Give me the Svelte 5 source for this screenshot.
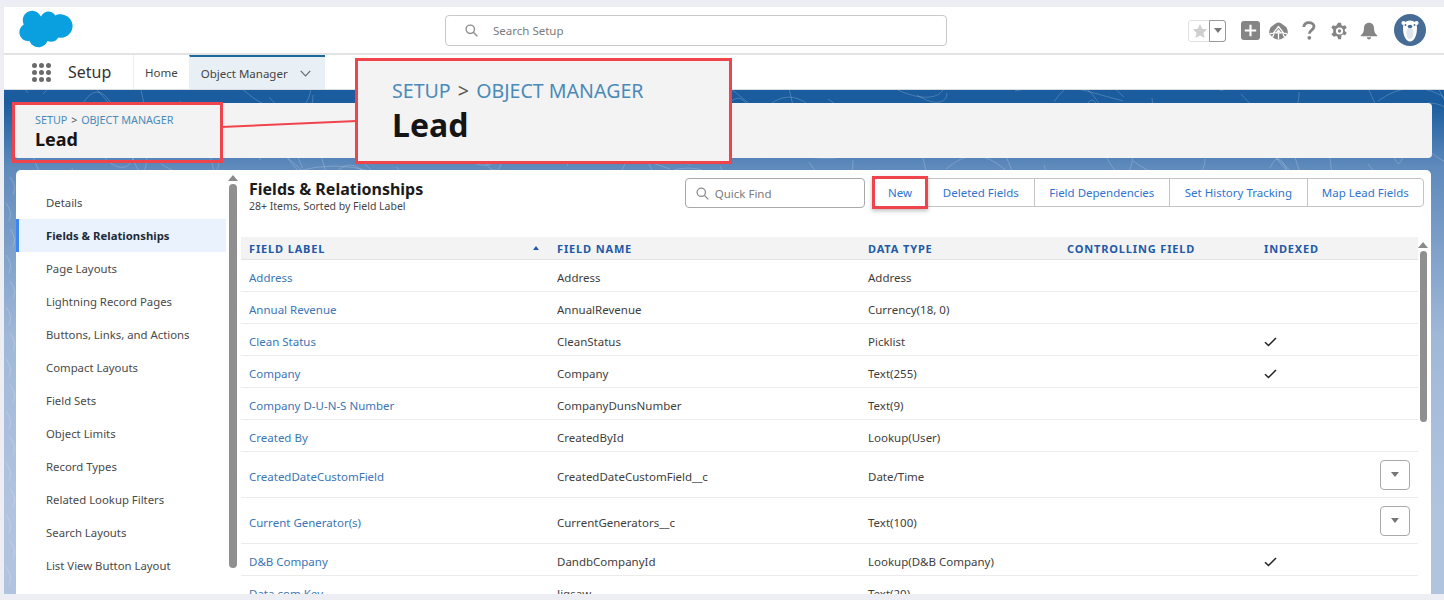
<script>
    const sideItems = [
        'Details', 'Fields & Relationships', 'Page Layouts', 'Lightning Record Pages',
        'Buttons, Links, and Actions', 'Compact Layouts', 'Field Sets', 'Object Limits',
        'Record Types', 'Related Lookup Filters', 'Search Layouts', 'List View Button Layout',
        'Scoping Rules'
    ];

    const rows = [
        { label: 'Address', name: 'Address', type: 'Address' },
        { label: 'Annual Revenue', name: 'AnnualRevenue', type: 'Currency(18, 0)' },
        { label: 'Clean Status', name: 'CleanStatus', type: 'Picklist', indexed: true },
        { label: 'Company', name: 'Company', type: 'Text(255)', indexed: true },
        { label: 'Company D-U-N-S Number', name: 'CompanyDunsNumber', type: 'Text(9)' },
        { label: 'Created By', name: 'CreatedById', type: 'Lookup(User)' },
        { label: 'CreatedDateCustomField', name: 'CreatedDateCustomField__c', type: 'Date/Time', menu: true },
        { label: 'Current Generator(s)', name: 'CurrentGenerators__c', type: 'Text(100)', menu: true },
        { label: 'D&B Company', name: 'DandbCompanyId', type: 'Lookup(D&B Company)', indexed: true },
        { label: 'Data.com Key', name: 'Jigsaw', type: 'Text(20)' }
    ];

    const actions = ['New', 'Deleted Fields', 'Field Dependencies', 'Set History Tracking', 'Map Lead Fields'];

    // faint contour lines on the blue banner
    const swirls = [];
    for (let i = 0; i < 120; i++) {
        const x = i * 12 + (i * 7) % 9;
        const y = 76 + (i * 37) % 100;
        const w = 8 + (i % 5) * 7;
        const h = 10 + (i % 4) * 8;
        if (i % 3 === 0) {
            swirls.push(`M${x} ${y}q${w} ${-h} ${w * 2} 0t${w} ${h}`);
        } else if (i % 3 === 1) {
            swirls.push(`M${x} ${y}c${w} ${h} ${w * 2} ${h} ${w * 2} ${-2}`);
        } else {
            swirls.push(`M${x} ${y}l${w / 2} ${h}`);
        }
    }
    for (let i = 0; i < 16; i++) {
        swirls.push(`M${i % 2 ? 2 : 6} ${170 + i * 26}c4 6 6 10 3 18`);
    }
</script>

<div class="frame">
    <svg class="swirls" width="1440" height="600" aria-hidden="true">
        {#each swirls as d}
            <path {d} />
        {/each}
    </svg>

    <header class="top">
        <svg class="logo" width="54" height="38" viewBox="0 0 54 38">
            <path fill="#0a9fdf" d="M22 6.5C24 3 27 1.3 30 1.6c2.8 .2 5 1.7 6.3 4 1.700-1 3.700-1.500 5.700-1.300C48.500 4.800 53.600 10 53.600 16c0 6.500-5.300 11.700-11.500 11.700-.9 0-1.800-.1-2.700-.3-1.500 2.600-4.300 4.300-7.400 4.300-1.300 0-2.500-.3-3.600-.8-1.500 3.900-5 6.300-9 6.300-4.200 0-7.700-2.700-9-6.400-.6 .1-1.200 .2-1.900 .2C4 31 .4 27 .4 22.300c0-3.300 1.700-6.100 4.300-7.700C4.100 13.300 3.800 11.800 3.800 10.300 3.800 4.800 8.300 .8 13.400 .8c3.500 0 6.600 2.300 8.600 5.700z"/>
        </svg>

        <div class="search">
            <svg width="13" height="13" viewBox="0 0 14 14" fill="none" stroke="#8c8c8c" stroke-width="1.500">
                <circle cx="5.700" cy="5.700" r="4.500"/><path d="M9 9l4.300 4.300"/>
            </svg>
            <span>Search Setup</span>
        </div>

        <div class="tools">
            <div class="fav">
                <span class="fav-star">
                    <svg width="16" height="16" viewBox="0 0 16 16"><path fill="#cfcfcf" d="M8 1l2.200 4.700 5 .6-3.700 3.500 1 5.100L8 12.400 3.500 14.900l1-5.100L.8 6.300l5-.6z"/></svg>
                </span>
                <span class="fav-more"><i class="caret"></i></span>
            </div>
            <svg class="ic-plus" width="19" height="19" viewBox="0 0 19 19">
                <rect width="19" height="19" rx="3" fill="#858585"/>
                <path d="M9.500 3.800v11.400M3.800 9.500h11.400" stroke="#fff" stroke-width="2.200"/>
            </svg>
            <svg class="ic-trail" width="19" height="18" viewBox="0 0 19 18">
                <path fill="#858585" d="M7 1.200C8.500 .4 10.500 .4 12 1.200l4.500 3.300c1.700 1.400 2.400 3.800 2.200 6.500-.1 1-.5 1.700-1.400 2.300-2 2.700-4.800 4.200-7.800 4.200s-5.800-1.500-7.800-4.200C.8 12.700 .4 12 .3 11 .1 8.300 .8 5.900 2.500 4.500z"/>
                <path fill="none" stroke="#fff" stroke-width="1.300" d="M.8 11.800c2.500-.6 4-1 5.500-1h6.400c1.500 0 3 .4 5.500 1M4.500 10.800L9.500 4.500l5 6.300M7.200 10.800L9.500 8l2.300 2.800M9.500 11v6.200M5 12l-1.500 3M14 12l1.500 3"/>
            </svg>
            <svg class="ic-help" width="14" height="19" viewBox="0 0 14 19" fill="none">
                <path d="M1.800 6C2 3.200 4.200 1.700 7 1.700c2.900 0 5 1.700 5 3.900 0 3.500-4.700 3.400-4.700 7.200" stroke="#858585" stroke-width="2.800"/>
                <circle cx="7.300" cy="16.800" r="1.900" fill="#858585"/>
            </svg>
            <svg class="ic-gear" width="17" height="18" viewBox="0 0 17 18">
                <path fill="#858585" d="M7 .8h3l.5 2.500 1.300 .7 2.400-.8 1.500 2.600-1.900 1.700v1.500l1.900 1.700-1.500 2.600-2.400-.8-1.300 .7L10 17.200H7l-.5-2.500-1.300-.7-2.400 .8L.3 12.200l1.900-1.700V9 7.500L.3 5.800l1.500-2.600 2.400 .8 1.300-.7z"/>
                <circle cx="8.500" cy="9" r="3.600" fill="#fff"/>
                <circle cx="8.500" cy="9" r="1.700" fill="#858585"/>
            </svg>
            <svg class="ic-bell" width="18" height="18" viewBox="0 0 18 18">
                <path fill="#858585" d="M9 .8c3.200 0 5 2.400 5 5.200 0 4 1 5.500 3.200 7.300v1H.8v-1C3 11.500 4 10 4 6c0-2.800 1.800-5.200 5-5.200z"/>
                <path fill="#858585" d="M6.800 15.300h4.400C11 16.600 10.100 17.400 9 17.400s-2-.8-2.200-2.100z"/>
            </svg>
            <svg class="avatar" width="32" height="32" viewBox="0 0 32 32">
                <circle cx="16" cy="16" r="16" fill="#476c96"/>
                <circle cx="9.500" cy="9" r="2.100" fill="#fff"/>
                <circle cx="22.500" cy="9" r="2.100" fill="#fff"/>
                <path fill="#fff" d="M16 6.500c4.500 0 7 3 7 7.500 0 6.800-2.500 13.500-7 13.500S9 20.800 9 14c0-4.500 2.500-7.500 7-7.500z"/>
                <path fill="#dfe5ec" d="M16 14c2.500 0 3.600 1.800 3.600 4.500 0 3.500-1.400 6.500-3.600 6.500s-3.600-3-3.600-6.500C12.400 15.800 13.500 14 16 14z"/>
                <ellipse cx="16" cy="12.500" rx="2.300" ry="1.700" fill="#476c96"/>
                <circle cx="11.500" cy="11" r=".9" fill="#476c96"/>
                <circle cx="20.500" cy="11" r=".9" fill="#476c96"/>
            </svg>
        </div>
    </header>

    <nav class="nav">
        <div class="waffle">
            {#each Array(9) as _}<i></i>{/each}
        </div>
        <span class="app-name">Setup</span>
        <span class="tab">Home</span>
        <span class="tab tab-on">
            Object Manager
            <svg width="11" height="7" viewBox="0 0 11 7" fill="none" stroke="#6b6b6b" stroke-width="1.200"><path d="M.7 .8l4.800 5 4.800-5"/></svg>
        </span>
    </nav>

    <section class="crumb-card">
        <div class="crumbs"><a href="#setup">SETUP</a> <b>&gt;</b> <a href="#om">OBJECT MANAGER</a></div>
        <h1>Lead</h1>
    </section>

    <main class="panel">
        <aside class="side">
            <ul>
                {#each sideItems as item}
                    <li class:active={item === 'Fields & Relationships'}>{item}</li>
                {/each}
            </ul>
            <div class="vbar vbar-side"><i class="up"></i><i class="thumb"></i></div>
        </aside>

        <div class="content">
            <div class="bar">
                <div>
                    <h2>Fields &amp; Relationships</h2>
                    <p>28+ Items, Sorted by Field Label</p>
                </div>
                <div class="quick">
                    <svg width="13" height="13" viewBox="0 0 14 14" fill="none" stroke="#8c8c8c" stroke-width="1.400">
                        <circle cx="5.700" cy="5.700" r="4.500"/><path d="M9 9l4.300 4.300"/>
                    </svg>
                    <span>Quick Find</span>
                </div>
                <div class="btns">
                    {#each actions as a}
                        <button type="button">{a}</button>
                    {/each}
                </div>
            </div>

            <div class="table">
                <div class="row head">
                    <span class="th-sort">FIELD LABEL <i class="sort"></i></span>
                    <span>FIELD NAME</span>
                    <span>DATA TYPE</span>
                    <span>CONTROLLING FIELD</span>
                    <span>INDEXED</span>
                </div>
                {#each rows as r}
                    <div class="row" class:tall={r.menu}>
                        <a href="#field">{r.label}</a>
                        <span>{r.name}</span>
                        <span>{r.type}</span>
                        <span></span>
                        <span class="idx">
                            {#if r.indexed}
                                <svg width="13" height="10" viewBox="0 0 13 10" fill="none" stroke="#222" stroke-width="1.500"><path d="M1 5.200l3.500 3.300L12 1"/></svg>
                            {/if}
                            {#if r.menu}
                                <span class="row-menu"><i class="caret"></i></span>
                            {/if}
                        </span>
                    </div>
                {/each}
                <div class="vbar vbar-table"><i class="up"></i><i class="thumb"></i></div>
            </div>
        </div>
    </main>

    <!-- annotations drawn over the screenshot -->
    <div class="mark mark-crumb"></div>
    <div class="mark mark-new"></div>
    <svg class="mark-line" width="136" height="10" viewBox="0 0 136 10"><path d="M0 8L136 2" stroke="#f0444c" stroke-width="2"/></svg>
    <div class="callout">
        <div class="crumbs"><a href="#setup">SETUP</a> <b>&gt;</b> <a href="#om">OBJECT MANAGER</a></div>
        <h1>Lead</h1>
    </div>
</div>

<style>
    :global(body) {
        margin: 0;
        background: #eceef3;
        overflow: hidden;
    }

    .frame {
        position: relative;
        box-sizing: border-box;
        display: flex;
        flex-direction: column;
        margin: 7px 0 0 4px;
        width: 1440px;
        height: 587px;
        overflow: hidden;
        background: linear-gradient(#1a5c9e 0, #1a5c9e 96px, #5f8abc 160px, #a0b8d8 330px, #b0c4e0 500px);
        font-family: "Noto Sans", "Open Sans", sans-serif;
        font-size: 11.5px;
        color: #3e3e3c;
    }

    .swirls {
        position: absolute;
        left: 0;
        top: 0;
        fill: none;
        stroke: rgba(255, 255, 255, 0.2);
    }

    .top {
        position: relative;
        display: flex;
        align-items: center;
        height: 46px;
        flex: none;
        background: #fff;
        border-bottom: 2px solid #e3e3e3;
    }

    .logo {
        margin: 0 0 3px 15px;
    }

    .search {
        display: flex;
        align-items: center;
        box-sizing: border-box;
        width: 502px;
        height: 31px;
        margin: 1px 0 0 372px;
        padding-left: 19px;
        gap: 15px;
        border: 1px solid #c9c9c9;
        border-radius: 4px;
        color: #7b7b7b;
    }

    .tools {
        display: flex;
        align-items: center;
        margin-left: 241px;
    }

    .fav {
        display: flex;
        box-sizing: border-box;
        width: 38px;
        height: 22px;
        margin-top: 1px;
        border: 1px solid #e2e2e2;
        border-radius: 3px;
    }

    .fav-star {
        display: flex;
        align-items: center;
        justify-content: center;
        width: 21px;
    }

    .fav-more {
        display: flex;
        flex: 1;
        align-items: center;
        justify-content: center;
        margin: -1px;
        border: 1px solid #9a9a9a;
        border-radius: 0 3px 3px 0;
    }

    .caret {
        display: block;
        width: 0;
        height: 0;
        border-left: 4px solid transparent;
        border-right: 4px solid transparent;
        border-top: 5px solid #777;
    }

    .ic-plus { margin: 1px 0 0 15px; }
    .ic-trail { margin: 1px 0 0 9px; }
    .ic-help { margin: 1px 0 0 14px; }
    .ic-gear { margin: 1px 0 0 15px; }
    .ic-bell { margin: 1px 0 0 12px; }
    .avatar { margin: 0 0 0 16px; }

    .nav {
        position: relative;
        display: flex;
        align-items: center;
        height: 35px;
        flex: none;
        background: #fff;
        border-bottom: 1px solid #d8dde3;
        box-sizing: border-box;
    }

    .waffle {
        display: grid;
        grid-template-columns: repeat(3, 5px);
        gap: 2px;
        margin-left: 28px;
    }

    .waffle i {
        width: 5px;
        height: 5px;
        border-radius: 50%;
        background: #6b6b6b;
    }

    .app-name {
        margin-left: 17px;
        width: 65px;
        font-size: 16px;
        color: #333;
    }

    .tab {
        display: flex;
        align-items: center;
        height: 100%;
        padding: 0 11px;
        border-left: 1px solid #eee;
        color: #444;
    }

    .tab-on {
        gap: 12px;
        box-sizing: border-box;
        width: 136px;
        background: #e9f0f5;
        border-top: 2px solid #1b6a9e;
    }

    .crumb-card {
        position: relative;
        box-sizing: border-box;
        flex: none;
        width: 1418px;
        height: 55px;
        margin: 13px 0 0 10px;
        padding: 10px 0 0 21px;
        background: #f3f3f3;
        border-radius: 4px;
    }

    .crumbs {
        font-size: 10.800px;
        line-height: 14px;
        color: #4a8ab8;
    }

    .crumbs a {
        color: #4a8ab8;
        text-decoration: none;
    }

    .crumbs b {
        margin: 0 1px;
        font-weight: 400;
        color: #555;
    }

    h1 {
        margin: 0;
        font-size: 18px;
        line-height: 24px;
        font-weight: 700;
        color: #151515;
    }

    .panel {
        position: relative;
        display: flex;
        flex: 1;
        min-height: 0;
        width: 1415px;
        margin: 12px 0 0 12px;
        overflow: hidden;
        background: #fff;
        border-radius: 5px 5px 0 0;
    }

    .side {
        position: relative;
        flex: none;
        width: 225px;
    }

    .side ul {
        list-style: none;
        margin: 0;
        padding: 16px 0 0;
        width: 210px;
    }

    .side li {
        box-sizing: border-box;
        height: 33px;
        line-height: 33px;
        padding-left: 30px;
        font-size: 11.350px;
        color: #4a4a4a;
    }

    .side li.active {
        padding-left: 27px;
        border-left: 3px solid #3b86f0;
        background: #eaf3fd;
        font-weight: 700;
        color: #1f2b38;
    }

    .vbar {
        position: absolute;
        display: flex;
        flex-direction: column;
        align-items: center;
    }

    .vbar .up {
        width: 0;
        height: 0;
        border-left: 5px solid transparent;
        border-right: 5px solid transparent;
        border-bottom: 6px solid #8a8a8a;
    }

    .vbar .thumb {
        margin-top: 3px;
        border-radius: 4px;
        background: #8f8f8f;
    }

    .vbar-side {
        left: 212px;
        top: 5px;
        width: 10px;
    }

    .vbar-side .thumb {
        width: 8px;
        height: 384px;
    }

    .vbar-table {
        right: 3px;
        top: 5px;
        width: 10px;
    }

    .vbar-table .thumb {
        width: 7px;
        height: 171px;
    }

    .content {
        flex: 1;
        min-width: 0;
    }

    .bar {
        position: relative;
        display: flex;
        align-items: flex-start;
        box-sizing: border-box;
        height: 67px;
        padding: 8px 7px 0 8px;
    }

    h2 {
        margin: 0;
        font-size: 16px;
        line-height: 22px;
        font-weight: 700;
        color: #1b1b1b;
    }

    .bar p {
        margin: -1px 0 0;
        font-size: 10.500px;
        line-height: 14px;
        color: #444;
    }

    .quick {
        display: flex;
        align-items: center;
        box-sizing: border-box;
        gap: 6px;
        width: 180px;
        height: 30px;
        margin-left: auto;
        padding-left: 10px;
        border: 1px solid #a9a9a9;
        border-radius: 4px;
        color: #7b7b7b;
    }

    .btns {
        display: flex;
        box-sizing: border-box;
        height: 29px;
        margin-left: 7px;
        border: 1px solid #c4c4c4;
        border-radius: 4px;
    }

    .btns button {
        height: 100%;
        padding: 0 14.700px;
        background: none;
        border: 0;
        border-left: 1px solid #c4c4c4;
        font: inherit;
        color: #2f74d0;
    }

    .btns button:first-child {
        padding: 0 15.200px;
        border-left: 0;
    }

    .btns button:last-child {
        padding: 0 14.200px;
    }

    .table {
        position: relative;
    }

    .row {
        display: grid;
        grid-template-columns: 308px 311px 199px 197px 1fr;
        align-items: center;
        box-sizing: border-box;
        width: 1177px;
        height: 32px;
        padding: 4px 0 0 8px;
        border-bottom: 1px solid #ebebeb;
    }

    .row.tall {
        height: 46px;
    }

    .row a {
        color: #3a75b5;
        text-decoration: none;
    }

    .head {
        height: 23px;
        padding-top: 0;
        background: #f3f3f3;
        border-bottom: 1px solid #e2e2e2;
        font-size: 11px;
        font-weight: 700;
        letter-spacing: 0.850px;
        color: #1f5aa6;
    }

    .th-sort {
        position: relative;
    }

    .sort {
        position: absolute;
        right: 18px;
        top: 5px;
        width: 0;
        height: 0;
        border-left: 3.500px solid transparent;
        border-right: 3.500px solid transparent;
        border-bottom: 4px solid #1f5aa6;
    }

    .idx {
        display: flex;
        align-items: center;
        justify-content: space-between;
        padding-right: 8px;
    }

    .row-menu {
        display: flex;
        align-items: center;
        justify-content: center;
        box-sizing: border-box;
        width: 30px;
        height: 30px;
        margin: -4px 0 0 auto;
        background: #fff;
        border: 1px solid #a9a9a9;
        border-radius: 4px;
    }

    .mark {
        position: absolute;
        box-sizing: border-box;
        border: 3px solid #f0444c;
    }

    .mark-crumb {
        left: 8px;
        top: 95px;
        width: 211px;
        height: 61px;
    }

    .mark-new {
        left: 868px;
        top: 169px;
        width: 56px;
        height: 33px;
        box-shadow: 0 2px 4px rgba(0, 0, 0, 0.25);
    }

    .mark-line {
        position: absolute;
        left: 217px;
        top: 112px;
    }

    .callout {
        position: absolute;
        box-sizing: border-box;
        left: 351px;
        top: 51px;
        width: 377px;
        height: 106px;
        padding: 18px 0 0 34px;
        background: #f3f3f3;
        border: 3px solid #f0444c;
    }

    .callout .crumbs {
        font-size: 19.600px;
        line-height: 24px;
    }

    .callout .crumbs b {
        margin: 0 2px;
    }

    .callout h1 {
        margin: 1px 0 0;
        font-size: 32px;
        line-height: 42px;
    }
</style>
